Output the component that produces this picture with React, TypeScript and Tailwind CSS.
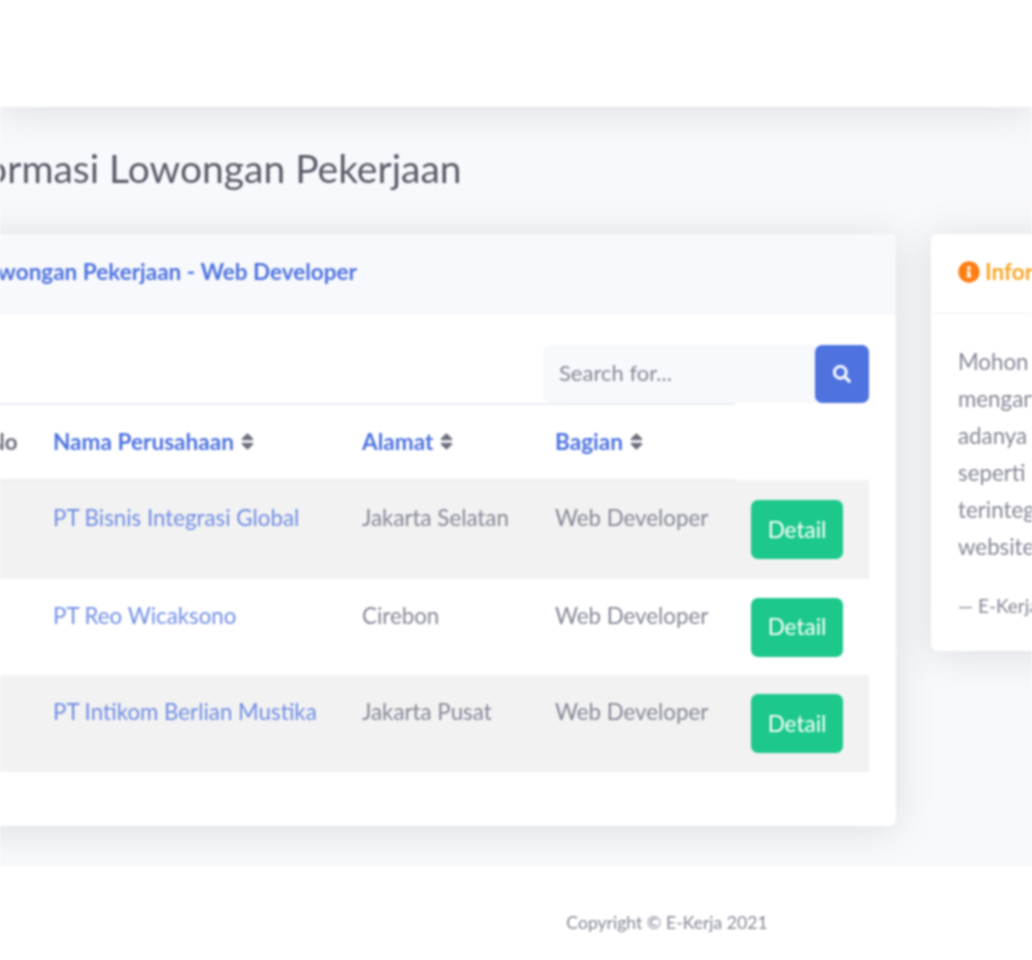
import { FaInfoCircle, FaSearch, FaSort } from "react-icons/fa";

const rows = [
  { no: "1", name: "PT Bisnis Integrasi Global", city: "Jakarta Selatan", height: "h-[99px]", striped: true },
  { no: "2", name: "PT Reo Wicaksono", city: "Cirebon", height: "h-[96px]", striped: false },
  { no: "3", name: "PT Intikom Berlian Mustika", city: "Jakarta Pusat", height: "h-[97px]", striped: true },
];

function SortHead({ label }: { label: string }) {
  return (
    <span className="inline-flex items-center gap-[7px] whitespace-nowrap text-[22.6px]">
      {label}
      <FaSort className="w-[13px] h-[21px] text-[#6e707e]" />
    </span>
  );
}

export default function App() {
  return (
    <div className="w-[1032px] h-[960px] overflow-hidden bg-white flex flex-col font-['Lato','Liberation_Sans',sans-serif] text-[#858796] blur-[0.8px]">
      <div className="relative z-10 h-[107px] shrink-0 bg-white shadow-[0_3px_38px_0_rgba(58,59,69,0.15)]" />

      <main className="h-[759px] shrink-0 bg-[#f8f9fc] -ml-[55px] w-[1100px] pt-[35px]">
        <h1 className="-ml-[5px] text-[39px] leading-[52px] text-[#5a5c69] whitespace-nowrap">
          Informasi Lowongan Pekerjaan
        </h1>

        <div className="flex gap-[35px] mt-[40px] items-start">
          <section className="w-[951px] h-[592px] shrink-0 bg-white rounded-[7px] shadow-[0_3px_38px_0_rgba(58,59,69,0.15)]">
            <div className="h-[80px] flex items-center pl-[29px] pb-[4px] bg-[#f8f9fc] border-b border-[#eff0f6] rounded-t-[7px] text-[22.5px] font-bold text-[#4e73df] whitespace-nowrap">
              Lowongan Pekerjaan - Web Developer
            </div>

            <div className="pl-[28px] pr-[27px] pt-[31px]">
              <div className="flex justify-end">
                <input
                  placeholder="Search for..."
                  className="w-[272px] h-[58px] px-[16px] pb-[4px] bg-[#f8f9fc] rounded-l-[7px] text-[22px] text-[#858796] placeholder:text-[#858796] outline-none"
                />
                <button className="w-[54px] h-[58px] flex items-center justify-center bg-[#4e73df] rounded-[7px] text-white">
                  <FaSearch className="w-[18px] h-[18px]" />
                </button>
              </div>

              <table className="table-fixed w-[896px] border-collapse text-[22.3px]">
                <colgroup>
                  <col className="w-[63px]" />
                  <col className="w-[309px]" />
                  <col className="w-[193px]" />
                  <col className="w-[197px]" />
                  <col className="w-[134px]" />
                </colgroup>
                <thead>
                  <tr className="h-[76px] text-left font-bold text-[#4e73df]">
                    <th className="pl-[15px] border-y-2 border-[#eaecf4] text-[#6e707e]">No</th>
                    <th className="pl-[17px] border-y-2 border-[#eaecf4]"><SortHead label="Nama Perusahaan" /></th>
                    <th className="pl-[17px] border-y-2 border-[#eaecf4]"><SortHead label="Alamat" /></th>
                    <th className="pl-[17px] border-y-2 border-[#eaecf4]"><SortHead label="Bagian" /></th>
                    <th />
                  </tr>
                </thead>
                <tbody>
                  {rows.map((row) => (
                    <tr key={row.no} className={row.striped ? "bg-[#f2f2f2]" : "bg-white"}>
                      <td className={`${row.height} align-top pt-[18px] pl-[15px] leading-[37px]`}>{row.no}</td>
                      <td className="align-top pt-[18px] pl-[17px] leading-[37px] text-[#4e73df] opacity-80 whitespace-nowrap">{row.name}</td>
                      <td className="align-top pt-[18px] pl-[17px] leading-[37px] whitespace-nowrap">{row.city}</td>
                      <td className="align-top pt-[18px] pl-[17px] leading-[37px] whitespace-nowrap">Web Developer</td>
                      <td className="align-middle pl-[16px]">
                        <button className="block w-[92px] h-[59px] bg-[#1cc88a] rounded-[7px] text-white text-[22.5px]">Detail</button>
                      </td>
                    </tr>
                  ))}
                </tbody>
              </table>
            </div>
          </section>

          <section className="w-[400px] h-[417px] shrink-0 bg-white rounded-[7px] shadow-[0_3px_38px_0_rgba(58,59,69,0.15)]">
            <div className="h-[80px] flex items-center gap-[5px] pl-[27px] pb-[4px] bg-white border-b border-[#eff0f6] rounded-t-[7px] text-[22.5px] font-bold text-[#f9a72b]">
              <FaInfoCircle className="w-[22px] h-[22px] text-[#fd7e14]" />
              Informasi
            </div>
            <div className="pl-[27px] pt-[29px] text-[22.3px] leading-[37px] whitespace-nowrap">
              <p>Mohon maaf apabila</p>
              <p>mengantisipasi</p>
              <p>adanya kendala</p>
              <p>seperti proses</p>
              <p>terintegrasi</p>
              <p>website ini.</p>
              <p className="mt-[22px] text-[19px]">— E-Kerja</p>
            </div>
          </section>
        </div>
      </main>

      <footer className="relative z-10 h-[94px] shrink-0 bg-white flex items-center justify-center pl-[302px] pt-[20px] text-[17.6px]">
        <span>Copyright © E-Kerja 2021</span>
      </footer>
    </div>
  );
}
